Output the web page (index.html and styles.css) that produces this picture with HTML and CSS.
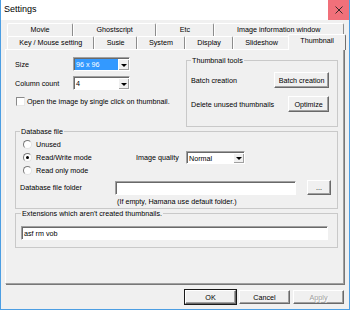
FILE: index.html
```html
<!DOCTYPE html>
<html>
<head>
<meta charset="utf-8">
<title>Settings</title>
<link rel="stylesheet" href="styles.css">
</head>
<body>
<div class="window">
  <div class="titlebar">
    <span class="title">Settings</span>
    <span class="close"><svg width="8" height="8" viewBox="0 0 8 8"><path d="M0.5 0.5L7.5 7.5M7.5 0.5L0.5 7.5" stroke="#3a2a2a" stroke-width="1" fill="none"/></svg></span>
  </div>
  <div class="tabs">
    <div class="tabrow">
      <div class="tab">Movie</div>
      <div class="tab">Ghostscript</div>
      <div class="tab">Etc</div>
      <div class="tab">Image information window</div>
    </div>
    <div class="tabrow">
      <div class="tab">Key / Mouse setting</div>
      <div class="tab">Susie</div>
      <div class="tab">System</div>
      <div class="tab">Display</div>
      <div class="tab">Slideshow</div>
      <div class="tab active">Thumbnail</div>
    </div>
  </div>
  <div class="panel">
    <div class="top">
      <div class="leftcol">
        <div class="field">
          <span class="lbl">Size</span>
          <div class="combo c57"><span class="val sel">96 x 96</span><span class="arrow"><i></i></span></div>
        </div>
        <div class="field">
          <span class="lbl">Column count</span>
          <div class="combo c57"><span class="val">4</span><span class="arrow"><i></i></span></div>
        </div>
        <div class="check"><span class="cbox"></span><span>Open the image by single click on thumbnail.</span></div>
      </div>
      <fieldset class="group thumbtools">
        <legend>Thumbnail tools</legend>
        <div class="grid2">
          <span>Batch creation</span><span class="btn b55">Batch creation</span>
          <span>Delete unused thumbnails</span><span class="btn b41">Optimize</span>
        </div>
      </fieldset>
    </div>
    <fieldset class="group db">
      <legend>Database file</legend>
      <div class="dbtop">
        <div class="radios">
          <div class="radio"><span class="rdot"></span><span>Unused</span></div>
          <div class="radio"><span class="rdot on"></span><span>Read/Write mode</span></div>
          <div class="radio"><span class="rdot"></span><span>Read only mode</span></div>
        </div>
        <div class="quality">
          <span class="lbl2">Image quality</span>
          <div class="combo c59"><span class="val">Normal</span><span class="arrow"><i></i></span></div>
        </div>
      </div>
      <div class="folder">
        <span class="lbl3">Database file folder</span>
        <span class="input w182"></span>
        <span class="btn dots">...</span>
      </div>
      <div class="note">(If empty, Hamana use default folder.)</div>
    </fieldset>
    <fieldset class="group ext">
      <legend>Extensions which aren't created thumbnails.</legend>
      <div class="input full">asf rm vob</div>
    </fieldset>
  </div>
  <div class="footer">
    <span class="btn fb default">OK</span>
    <span class="btn fb">Cancel</span>
    <span class="btn fb disabled">Apply</span>
  </div>
</div>
</body>
</html>
```
FILE: styles.css
```css
* { box-sizing: border-box; }
html, body { margin: 0; padding: 0; }
body {
  width: 350px;
  height: 310px;
  overflow: hidden;
  background: #fff;
  font-family: "Liberation Sans", Arial, sans-serif;
  font-size: 7.2px;
  line-height: 9px;
  color: #000;
}
.window {
  width: 350px;
  height: 310px;
  border: 1px solid #4c9ee3;
  border-top: 0;
  background: #f0f0f0;
  display: flex;
  flex-direction: column;
}
.titlebar {
  height: 20px;
  flex: none;
  background: #fff;
  display: flex;
  justify-content: space-between;
}
.title {
  font-size: 9px;
  line-height: 18px;
  padding-left: 3px;
}
.close {
  width: 21px;
  height: 20px;
  background: #f1707a;
  display: flex;
  align-items: center;
  justify-content: center;
}
.tabs {
  margin-top: 3px;
  padding: 0 5px 0 6px;
  flex: none;
}
.tabrow {
  display: flex;
  height: 13px;
}
.tab {
  flex: 1 1 auto;
  text-align: center;
  white-space: nowrap;
  line-height: 11px;
  border-top: 1px solid #fff;
  border-left: 1px solid #fff;
  border-right: 1px solid #8c8c8c;
  border-radius: 2px 2px 0 0;
}
.tab.active {
  margin: -2px -2px -1px;
  height: 16px;
  position: relative;
  z-index: 1;
  background: #f0f0f0;
  border-right-color: #6f6f6f;
}
.panel {
  flex: none;
  margin: 0 5px 0 4px;
  height: 235px;
  border: 1px solid;
  border-color: #fff #a0a0a0 #a0a0a0 #fff;
  box-shadow: 1px 1px 0 #777;
  padding: 6px 5px 0 9px;
}
.top { display: flex; }
.leftcol { flex: 1; padding-top: 1px; }
.field {
  display: flex;
  align-items: center;
  height: 14px;
}
.field + .field { margin-top: 5px; }
.lbl { width: 58px; }
.combo {
  display: flex;
  height: 14px;
  background: #fff;
  border: 1px solid;
  border-color: #a0a0a0 #fff #fff #a0a0a0;
  box-shadow: inset 1px 1px 0 #696969;
  padding: 1px 0 0 1px;
}
.c57 { width: 57px; }
.c59 { width: 59px; height: 13px; }
.val {
  flex: 1;
  padding-left: 1px;
  display: flex;
  align-items: center;
  white-space: nowrap;
}
.val.sel { background: #3399ff; color: #fff; }
.arrow {
  width: 11px;
  flex: none;
  background: #f0f0f0;
  border-left: 1px solid #fff;
  border-top: 1px solid #fff;
  box-shadow: inset -1px -1px 0 #a0a0a0;
  display: flex;
  align-items: center;
  justify-content: center;
}
.arrow i {
  width: 0;
  height: 0;
  border-left: 3px solid transparent;
  border-right: 3px solid transparent;
  border-top: 3px solid #000;
}
.check {
  display: flex;
  align-items: center;
  height: 9px;
  margin-top: 7px;
  white-space: nowrap;
}
.cbox {
  width: 9px;
  height: 9px;
  margin: 0 2px 0 1px;
  background: #fff;
  border: 1px solid;
  border-color: #8a8a8a #e8e8e8 #e8e8e8 #8a8a8a;
}
fieldset.group {
  margin: 0;
  min-width: 0;
  border: 1px solid #c9c9c9;
  border-radius: 0;
}
legend {
  padding: 0 1px;
  line-height: 9px;
  white-space: nowrap;
}
.thumbtools {
  flex: none;
  width: 152px;
  padding: 7px 9px 14px 4px;
}
.grid2 {
  display: grid;
  grid-template-columns: 1fr auto;
  row-gap: 8px;
  align-items: center;
  white-space: nowrap;
}
.btn {
  display: flex;
  align-items: center;
  justify-content: center;
  background: #f0f0f0;
  border: 1px solid;
  border-color: #fff #696969 #696969 #fff;
  box-shadow: inset -1px -1px 0 #a0a0a0;
  white-space: nowrap;
}
.grid2 .btn { height: 16px; justify-self: end; }
.b55 { width: 55px; }
.b41 { width: 41px; }
.db {
  margin-top: 5px;
  padding: 2px 6px 2px 4px;
}
.dbtop { display: flex; }
.radios { width: 116px; flex: none; }
.radio {
  display: flex;
  align-items: center;
  height: 13px;
  white-space: nowrap;
}
.rdot {
  width: 9px;
  height: 9px;
  margin: 0 4px 0 3px;
  border-radius: 50%;
  background: #fff;
  border: 1px solid;
  border-color: #7a7a7a #e3e3e3 #e3e3e3 #7a7a7a;
  display: flex;
  align-items: center;
  justify-content: center;
}
.rdot.on::after {
  content: "";
  width: 3px;
  height: 3px;
  border-radius: 50%;
  background: #000;
}
.quality {
  display: flex;
  align-items: center;
  align-self: center;
}
.lbl2 { width: 50px; white-space: nowrap; }
.folder {
  display: flex;
  align-items: center;
  height: 15px;
  margin-top: 3px;
}
.lbl3 { width: 95px; white-space: nowrap; }
.input {
  display: flex;
  align-items: center;
  height: 14px;
  background: #fff;
  border: 1px solid;
  border-color: #a0a0a0 #fff #fff #a0a0a0;
  box-shadow: inset 1px 1px 0 #696969;
  padding-left: 2px;
  white-space: nowrap;
}
.w182 { width: 182px; }
.dots {
  width: 24px;
  height: 15px;
  margin-left: 11px;
}
.note {
  margin-top: 2px;
  margin-left: 97px;
  white-space: nowrap;
}
.ext {
  margin-top: 11px;
  padding: 8px 9px 7px 5px;
}
.footer {
  display: flex;
  justify-content: flex-end;
  gap: 3px;
  margin-top: 6px;
  padding-right: 5px;
}
.fb { width: 51px; height: 14px; }
.fb.default { outline: 1px solid #1a1a1a; outline-offset: 0; }
.fb.disabled { color: #a0a0a0; text-shadow: 1px 1px 0 #fff; }
```
